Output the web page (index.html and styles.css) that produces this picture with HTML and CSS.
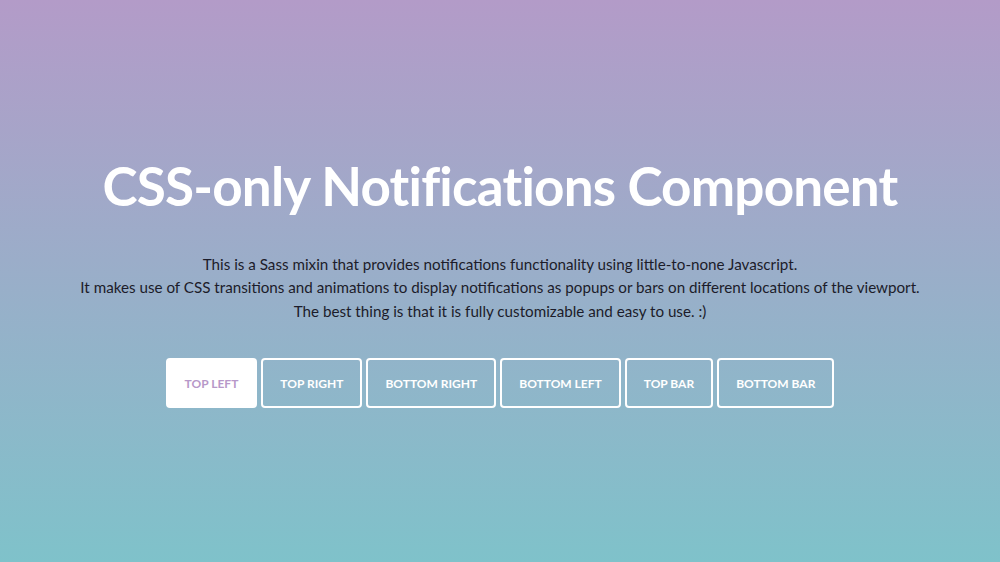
FILE: index.html
```html
<!DOCTYPE html>
<html lang="en">
<head>
    <meta charset="UTF-8">
    <meta name="viewport" content="width=device-width, initial-scale=1.0">
    <title>CSS-only Notifications Component</title>
    <link rel="stylesheet" href="styles.css">
</head>
<body>
    <div class="container">
        <h1>CSS-only Notifications Component</h1>
        <p class="intro">
            This is a Sass mixin that provides notifications functionality using little-to-none Javascript.<br>
            It makes use of CSS transitions and animations to display notifications as popups or bars on different locations of the viewport.<br>
            The best thing is that it is fully customizable and easy to use. :)
        </p>
        <div class="buttons">
            <button class="btn active">Top left</button>
            <button class="btn">Top right</button>
            <button class="btn">Bottom right</button>
            <button class="btn">Bottom left</button>
            <button class="btn">Top bar</button>
            <button class="btn">Bottom bar</button>
        </div>
    </div>
</body>
</html>
```

FILE: styles.css
```css
html, body {
    height: 100%;
}
body {
    font-family: 'Lato', 'Open Sans', sans-serif;
    background: linear-gradient(180deg, #b39bc8 0%, #7fc2ca 100%);
    color: #1c1c2a;
    margin: 0;
    display: flex;
    align-items: center;
    justify-content: center;
}
.container {
    text-align: center;
}
h1 {
    font-size: 53px;
    font-weight: 700;
    color: #fff;
    margin: 0 0 35px;
    line-height: 1.2;
    letter-spacing: -0.8px;
}
.intro {
    font-size: 15.2px;
    line-height: 23.5px;
    margin: 0 0 35px;
}
.buttons {
    display: flex;
    justify-content: center;
    gap: 4px;
}
.btn {
    font-family: inherit;
    font-size: 12px;
    font-weight: 700;
    text-transform: uppercase;
    color: #fff;
    background: transparent;
    border: 2px solid #fff;
    border-radius: 4px;
    height: 50px;
    padding: 0 17px;
    cursor: pointer;
}
.btn.active {
    background: #fff;
    color: #b798c9;
}
```
